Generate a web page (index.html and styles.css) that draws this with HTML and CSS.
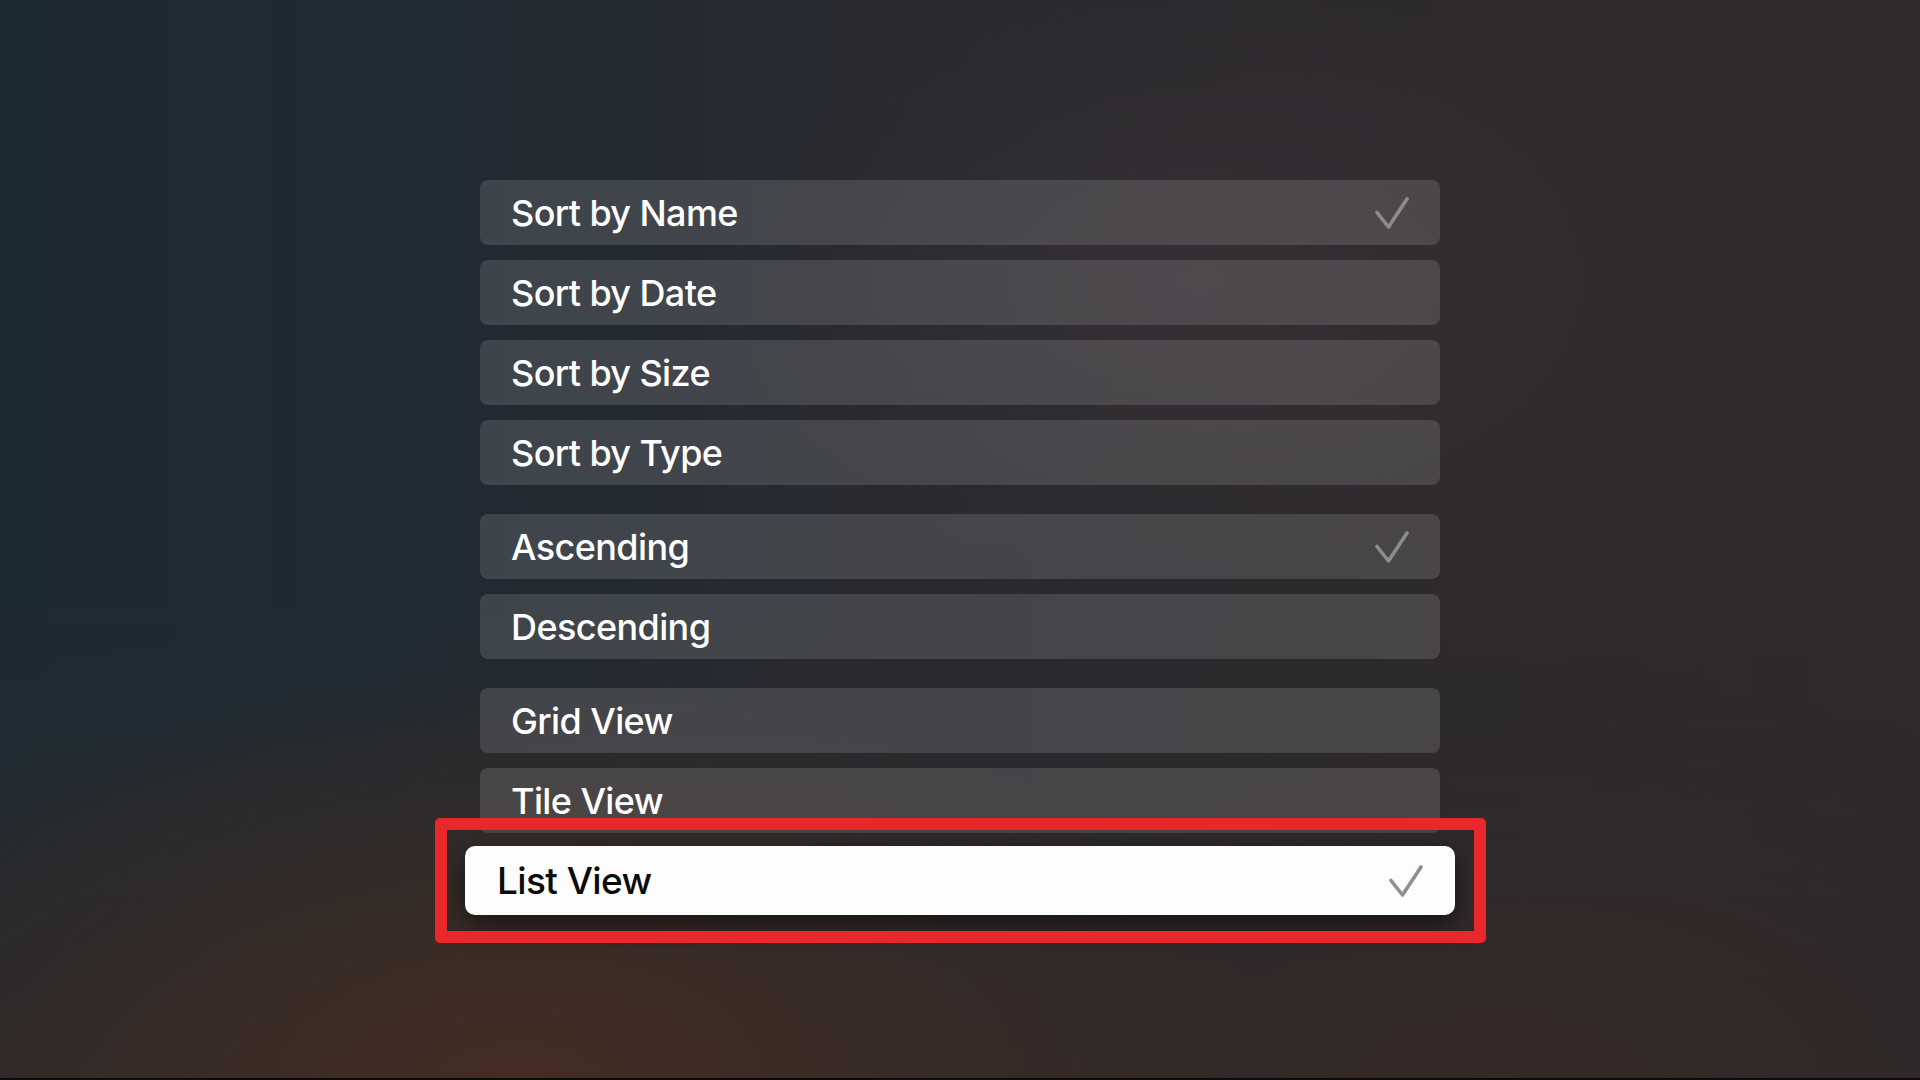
FILE: index.html
```html
<!DOCTYPE html>
<html lang="en">
<head>
<meta charset="utf-8">
<title>View Options</title>
<link rel="stylesheet" href="styles.css">
</head>
<body>
<div class="screen">
  <div class="menu">
    <div class="group">
      <div class="row"><span class="label">Sort by Name</span>
        <svg class="check" viewBox="0 0 34 32"><path d="M2 15.5 L13.5 30 L32 2"/></svg></div>
      <div class="row"><span class="label">Sort by Date</span></div>
      <div class="row"><span class="label">Sort by Size</span></div>
      <div class="row"><span class="label">Sort by Type</span></div>
    </div>
    <div class="group">
      <div class="row"><span class="label">Ascending</span>
        <svg class="check" viewBox="0 0 34 32"><path d="M2 15.5 L13.5 30 L32 2"/></svg></div>
      <div class="row"><span class="label">Descending</span></div>
    </div>
    <div class="group">
      <div class="row"><span class="label">Grid View</span></div>
      <div class="row"><span class="label">Tile View</span></div>
      <div class="row focused"><span class="label">List View</span>
        <svg class="check" viewBox="0 0 34 32"><path d="M2 15.5 L13.5 30 L32 2"/></svg></div>
    </div>
  </div>
</div>
</body>
</html>
```
FILE: styles.css
```css
html, body {
  margin: 0;
  padding: 0;
}
body {
  width: 1920px;
  height: 1080px;
  overflow: hidden;
  font-family: Inter, "Liberation Sans", sans-serif;
  background:
    radial-gradient(ellipse 760px 420px at 520px 1090px, rgba(70, 45, 34, 0.95), rgba(70, 45, 34, 0) 100%),
    radial-gradient(ellipse 700px 380px at 1500px 1100px, rgba(58, 42, 38, 0.8), rgba(58, 42, 38, 0) 100%),
    radial-gradient(ellipse 500px 300px at 1200px 280px, rgba(70, 58, 64, 0.35), rgba(70, 58, 64, 0) 100%),
    linear-gradient(180deg, rgba(42, 42, 44, 0) 55%, rgba(42, 41, 42, 0.9) 100%),
    linear-gradient(90deg, #1c2a34 0%, #1f2a33 20%, #262a31 38%, #2c2a2e 60%, #302a2c 100%);
}
.screen {
  width: 1920px;
  height: 1078px;
  border-bottom: 2px solid #0c0c0c;
  box-sizing: content-box;
}
.menu {
  width: 960px;
  margin: 0 auto;
  padding-top: 180px;
  display: flex;
  flex-direction: column;
  gap: 29px;
}
.group {
  display: flex;
  flex-direction: column;
  gap: 15px;
}
.row {
  height: 65px;
  border-radius: 8px;
  background: rgba(255, 255, 255, 0.13);
  display: flex;
  align-items: center;
  justify-content: space-between;
  padding: 0 31px 0 31px;
  box-sizing: border-box;
  color: #ffffff;
}
.label {
  font-size: 36px;
  font-weight: 500;
  letter-spacing: -0.6px;
}
.check {
  width: 34px;
  height: 32px;
  fill: none;
  stroke: #8c8b8e;
  stroke-width: 3.6;
  stroke-linecap: round;
  stroke-linejoin: round;
}
.row.focused {
  position: relative;
  height: 69px;
  margin: -2px -15px 0 -15px;
  padding: 0 32px 0 32px;
  border-radius: 10px;
  background: #fdfdfd;
  color: #0b0b0b;
  box-shadow: 0 10px 28px rgba(0, 0, 0, 0.55);
}
.row.focused .label {
  font-size: 37px;
}
.row.focused .check {
  stroke: #8f8f8f;
}
.row.focused::after {
  content: "";
  position: absolute;
  left: -30px;
  top: -28px;
  right: -31px;
  bottom: -28px;
  border: 12px solid #e8282b;
  border-radius: 5px;
  pointer-events: none;
}
```
